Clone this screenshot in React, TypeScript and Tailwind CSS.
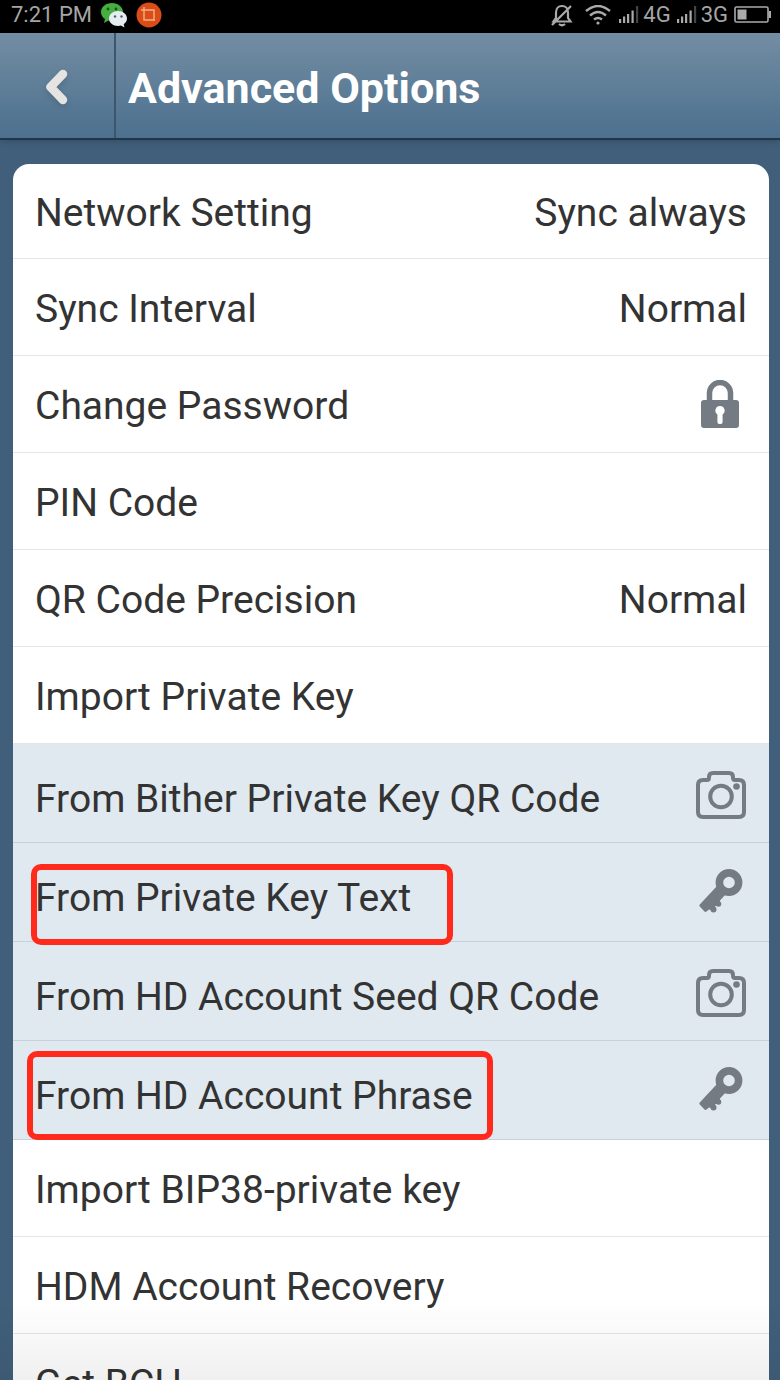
import type { ReactNode } from "react";

type Row = {
  label: string;
  value?: string;
  icon?: ReactNode;
  mark?: string;
};

function LockIcon() {
  return (
    <svg viewBox="0 0 40 48" className="mr-[7px] mb-1 h-12 w-10" aria-hidden="true">
      <path d="M9.500 22V13a10.500 10.500 0 0 1 21 0v9" fill="none" stroke="#747b82" strokeWidth="5.500" />
      <path
        fillRule="evenodd"
        fill="#747b82"
        d="M4 20h32a3 3 0 0 1 3 3v22a3 3 0 0 1-3 3H4a3 3 0 0 1-3-3V23a3 3 0 0 1 3-3ZM20 26a4.600 4.600 0 0 0-2.600 8.400V42a2 2 0 0 0 2 2h1.200a2 2 0 0 0 2-2v-7.600A4.600 4.600 0 0 0 20 26Z"
      />
    </svg>
  );
}

function CameraIcon() {
  return (
    <svg viewBox="0 0 50 48" className="mr-px h-12 w-[50px]" aria-hidden="true">
      <path
        d="M7 9h4q2 0 2-2.500V6q0-4 4-4h16q4 0 4 4v.5Q37 9 39 9h4q5 0 5 5v27q0 5-5 5H7q-5 0-5-5V14q0-5 5-5Z"
        fill="none"
        stroke="#747b82"
        strokeWidth="4"
      />
      <circle cx="25" cy="25.500" r="10.800" fill="none" stroke="#747b82" strokeWidth="4" />
      <circle cx="40.500" cy="15.500" r="3.300" fill="#747b82" />
    </svg>
  );
}

function KeyIcon() {
  return (
    <svg viewBox="0 0 44 46" className="mr-1 mb-1.5 h-[46px] w-11" fill="#747b82" aria-hidden="true">
      <circle cx="30" cy="14.500" r="9.600" fill="none" stroke="#747b82" strokeWidth="7.600" />
      <path d="M18 18 .8 36.500a1.500 1.500 0 0 0 0 2L5.500 43.500a1.500 1.500 0 0 0 2 0L10 41.500l4.500 1 2-4.500 3.500-.5 1-5 5.500-6Z" />
      <circle cx="14.500" cy="41.500" r="3" />
      <circle cx="19.500" cy="36" r="2.800" />
    </svg>
  );
}

const general: Row[] = [
  { label: "Network Setting", value: "Sync always" },
  { label: "Sync Interval", value: "Normal" },
  { label: "Change Password", icon: <LockIcon /> },
  { label: "PIN Code" },
  { label: "QR Code Precision", value: "Normal" },
  { label: "Import Private Key" },
];

const importSources: Row[] = [
  { label: "From Bither Private Key QR Code", icon: <CameraIcon /> },
  {
    label: "From Private Key Text",
    icon: <KeyIcon />,
    mark: "left-[18px] top-[21px] h-[81px] w-[422px]",
  },
  { label: "From HD Account Seed QR Code", icon: <CameraIcon /> },
  {
    label: "From HD Account Phrase",
    icon: <KeyIcon />,
    mark: "left-[14px] top-[10px] h-[89px] w-[466px]",
  },
];

const recovery: Row[] = [
  { label: "Import BIP38-private key" },
  { label: "HDM Account Recovery" },
  { label: "Get BCH" },
];

function PlainRow({ row, first = false }: { row: Row; first?: boolean }) {
  return (
    <li className="border-b border-[#e4e6e8]">
      <button
        type="button"
        className={`flex w-full items-center justify-between px-[22px] pt-1 text-left ${first ? "h-[94px]" : "h-24"}`}
      >
        <span>{row.label}</span>
        {row.value && <span>{row.value}</span>}
        {row.icon}
      </button>
    </li>
  );
}

function ImportRow({ row }: { row: Row }) {
  return (
    <li className="relative border-b border-[#c8d1d9] bg-[#e0e9f0]">
      <button type="button" className="flex h-[98px] w-full items-center justify-between px-[22px] pt-3 text-left">
        <span>{row.label}</span>
        <span className="pb-2">{row.icon}</span>
      </button>
      {row.mark && (
        <span className={`pointer-events-none absolute z-10 rounded-[10px] border-6 border-[#ff2a1c] ${row.mark}`} />
      )}
    </li>
  );
}

function Signal() {
  return (
    <svg viewBox="0 0 22 18" className="h-[18px] w-[22px]" fill="#aaa" aria-hidden="true">
      <rect x="0" y="13" width="2.200" height="4" />
      <rect x="4" y="10.500" width="2.200" height="6.500" />
      <rect x="8" y="8" width="2.200" height="9" />
      <rect x="12.500" y="4.500" width="2.200" height="12.500" />
      <rect x="17" y="0" width="2.200" height="17" fill="#444" />
    </svg>
  );
}

function StatusBar() {
  return (
    <div className="flex h-[33px] shrink-0 items-center justify-between bg-black pr-2 pb-1 pl-[11px] text-[22px] leading-7 text-[#a5a5a5]">
      <div className="flex items-center">
        <span>7:21 PM</span>
        <svg viewBox="0 0 28 26" className="ml-2 h-[26px] w-7" aria-hidden="true">
          <path d="M12 1C5.500 1 1 5 1 10c0 3 1.500 5.500 4 7l-1 4 4.500-2.500 3.500.5c6 0 11-4 11-9s-5-9-11-9Z" fill="#46ae40" />
          <circle cx="8" cy="7" r="1.400" fill="#17551b" />
          <circle cx="16" cy="7" r="1.400" fill="#17551b" />
          <path d="M18 9c-5 0-9 3.300-9 7.500S13 24 18 24l3-.5 3.500 2-.8-3.300c2-1.300 3.300-3.300 3.300-5.700C27 12.300 23 9 18 9Z" fill="#e5edf2" />
          <circle cx="15" cy="14.500" r="1.200" fill="#526068" />
          <circle cx="21.500" cy="14.500" r="1.200" fill="#526068" />
        </svg>
        <svg viewBox="0 0 26 26" className="ml-2 h-[26px] w-[26px]" aria-hidden="true">
          <circle cx="13" cy="13" r="12.500" fill="#dc4c16" />
          <path d="M5 8h13v11M8 5v13h11" fill="none" stroke="#efb08c" strokeWidth="1.400" />
        </svg>
      </div>
      <div className="flex items-center">
        <svg viewBox="0 0 22 24" className="h-6 w-[22px]" fill="none" stroke="#aaa" strokeWidth="2.200" aria-hidden="true">
          <path d="M2.500 18.500h17l-2.500-3.500V9.500C17 5.500 14.500 3 11 3S5 5.500 5 9.500V15l-2.500 3.500ZM8 21q3 2.500 6 0M1 22 20 3" />
        </svg>
        <svg viewBox="0 0 26 20" className="ml-3 h-5 w-[26px]" fill="none" stroke="#aaa" strokeWidth="2.400" aria-hidden="true">
          <path d="M1 6q12-10 24 0M5 10.500q8-7 16 0M9 14.500q4-3 8 0" />
          <circle cx="13" cy="18" r="1.600" fill="#aaa" stroke="none" />
        </svg>
        <span className="ml-2 flex items-center">
          <Signal />
          <span className="ml-0.5">4G</span>
        </span>
        <span className="ml-1.5 flex items-center">
          <Signal />
          <span className="ml-0.5">3G</span>
        </span>
        <svg viewBox="0 0 38 18" className="ml-1.5 h-[18px] w-[38px]" aria-hidden="true">
          <rect x="1" y="1" width="33" height="15" rx="1.500" fill="none" stroke="#aaa" strokeWidth="1.600" />
          <rect x="3.500" y="3.500" width="9" height="10" fill="#aaa" />
          <rect x="34.500" y="5" width="2.500" height="7" fill="#aaa" />
        </svg>
      </div>
    </div>
  );
}

export default function App() {
  return (
    <div className="relative flex h-screen flex-col overflow-hidden bg-[#415f7a] font-[Roboto,sans-serif] text-[#333]">
      <StatusBar />
      <header className="z-10 flex h-[107px] shrink-0 items-stretch border-b-2 border-[#1d364b] bg-linear-to-b from-[#738da3] to-[#4c708e] shadow-md">
        <button
          type="button"
          aria-label="Back"
          className="flex w-[116px] items-center justify-center border-r-2 border-[#3c566c] pt-0.5"
        >
          <svg viewBox="0 0 28 40" className="h-10 w-7 drop-shadow-md" aria-hidden="true">
            <path d="M20 7 7.500 20 20 33" fill="none" stroke="#e6e4e2" strokeWidth="8.500" strokeLinecap="round" strokeLinejoin="round" />
          </svg>
        </button>
        <h1 className="flex items-center pt-1 pl-3 text-[43px] leading-[52px] font-bold text-white">
          Advanced Options
        </h1>
      </header>
      <main className="min-h-0 flex-1 overflow-y-auto pt-6 pr-[11px] pl-[13px] text-[39px] leading-[48px] [scrollbar-width:none]">
        <ul className="overflow-hidden rounded-t-2xl bg-white">
          {general.map((row, index) => (
            <PlainRow key={row.label} row={row} first={index === 0} />
          ))}
          <li>
            <ul>
              {importSources.map((row) => (
                <ImportRow key={row.label} row={row} />
              ))}
            </ul>
          </li>
          {recovery.map((row) => (
            <PlainRow key={row.label} row={row} />
          ))}
        </ul>
      </main>
      <div className="pointer-events-none absolute inset-x-0 bottom-0 h-20 bg-linear-to-b from-transparent to-black/6" />
    </div>
  );
}
